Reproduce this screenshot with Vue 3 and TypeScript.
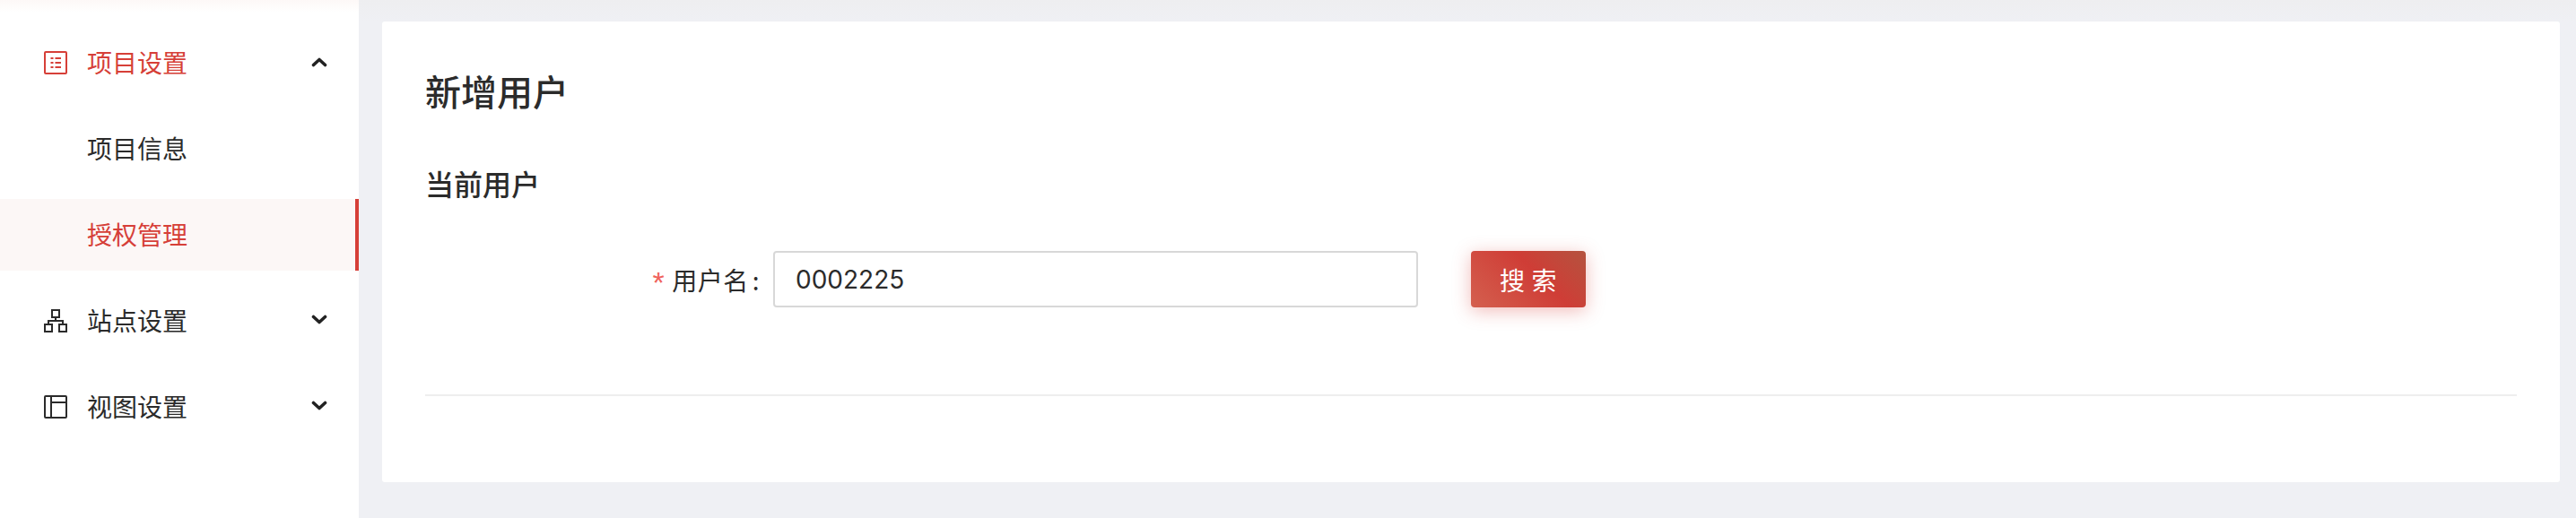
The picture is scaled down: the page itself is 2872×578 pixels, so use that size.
<script setup lang="ts">
interface Child { label: string; active?: boolean }
interface MenuItem { label: string; icon: 'list' | 'tree' | 'layout'; open?: boolean; active?: boolean; children?: Child[] }

const menu: MenuItem[] = [
  { label: '项目设置', icon: 'list', open: true, active: true, children: [
    { label: '项目信息' },
    { label: '授权管理', active: true },
  ] },
  { label: '站点设置', icon: 'tree' },
  { label: '视图设置', icon: 'layout' },
]
</script>

<template>
  <div class="page">
    <aside class="sidebar">
      <div class="fade"></div>
      <template v-for="item in menu" :key="item.label">
        <div class="row" :class="{ red: item.active }">
          <svg class="icon" viewBox="0 0 26 26" fill="none" stroke="currentColor" stroke-width="2">
            <template v-if="item.icon === 'list'">
              <rect x="1" y="1" width="24" height="24" rx="1" />
              <path d="M7.500 8h3M12.500 8h6.500M7.500 13h3M12.500 13h6.500M7.500 18h3M12.500 18h6.500" />
            </template>
            <template v-else-if="item.icon === 'tree'">
              <rect x="9" y="1" width="8" height="8" />
              <rect x="1" y="17" width="8" height="8" />
              <rect x="17" y="17" width="8" height="8" />
              <path d="M13 9v4M5 17v-4h16v4" />
            </template>
            <template v-else>
              <rect x="1" y="1" width="24" height="24" rx="1" />
              <path d="M8 1v24M8 8h17" />
            </template>
          </svg>
          <span class="label">{{ item.label }}</span>
          <svg class="chev" viewBox="0 0 18 12" fill="none" stroke="#222" stroke-width="3.600" stroke-linecap="round" stroke-linejoin="round">
            <path :d="item.open ? 'M2.500 9.500L9 3.500l6.500 6' : 'M2.500 2.500L9 8.500l6.500-6'" />
          </svg>
        </div>
        <div
          v-for="child in item.children"
          :key="child.label"
          class="row child"
          :class="{ selected: child.active }"
        >
          <span class="label">{{ child.label }}</span>
        </div>
      </template>
    </aside>

    <main class="main">
      <section class="card">
        <h1 class="title">新增用户</h1>
        <h2 class="subtitle">当前用户</h2>
        <div class="form-row">
          <label class="field-label"><span class="star">*</span>用户名<span class="colon">:</span></label>
          <input class="input" value="0002225" />
          <button class="btn">搜 索</button>
        </div>
        <div class="divider"></div>
      </section>
    </main>
  </div>
</template>

<style>
html, body { margin: 0; padding: 0; background: #eff0f4; }
</style>

<style scoped>
.page {
  display: flex;
  width: 2872px;
  height: 578px;
  overflow: hidden;
  font-family: "Noto Sans CJK SC", "Noto Sans", sans-serif;
  color: #2b2b2b;
}
.sidebar {
  width: 400px;
  flex: none;
  background: #fff;
  padding-top: 30px;
  box-sizing: border-box;
  position: relative;
  display: flex;
  flex-direction: column;
  gap: 16px;
}
.fade {
  position: absolute;
  left: 0;
  right: 0;
  top: 0;
  height: 14px;
  background: linear-gradient(#fdf8f7, #fff);
}
.row {
  height: 80px;
  display: flex;
  align-items: center;
  padding-left: 49px;
  padding-right: 35px;
  box-sizing: border-box;
  font-size: 28px;
  flex: none;
}
.row.red { color: #d63f38; }
.icon { width: 26px; height: 26px; flex: none; margin-right: 22px; }
.label { line-height: 40px; position: relative; top: -1px; }
.chev { width: 18px; height: 12px; margin-left: auto; flex: none; position: relative; top: -1px; }
.child { padding-left: 97px; }
.selected {
  background: #fcf7f6;
  color: #d63f38;
  border-right: 4px solid #d63f38;
}
.main {
  flex: 1;
  padding: 24px 18px 40px 26px;
  box-sizing: border-box;
  background: linear-gradient(#eeeef0, #eff0f4 24px);
}
.card {
  height: 514px;
  background: #fff;
  border-radius: 3px;
  padding: 0 48px;
  box-sizing: border-box;
}
.title {
  margin: 0;
  padding-top: 50px;
  font-size: 40px;
  line-height: 54px;
  font-weight: 500;
  color: #2b2b2b;
}
.subtitle {
  margin: 0;
  padding-top: 51px;
  font-size: 32px;
  line-height: 50px;
  font-weight: 500;
  color: #2b2b2b;
}
.form-row {
  display: flex;
  align-items: center;
  margin-top: 51px;
  height: 63px;
}
.field-label {
  width: 388px;
  flex: none;
  display: flex;
  justify-content: flex-end;
  align-items: center;
  font-size: 28px;
  letter-spacing: 0.5px;
  box-sizing: border-box;
  padding-right: 15px;
}
.colon { margin-left: 4px; }
.star {
  color: #f0635c;
  margin-right: 8px;
  font-family: "Liberation Sans", sans-serif;
  font-size: 34px;
  line-height: 1;
  position: relative;
  top: 3px;
}
.input {
  width: 719px;
  height: 63px;
  flex: none;
  box-sizing: border-box;
  border: 2px solid #d8d8d8;
  border-radius: 4px;
  padding: 0 23px;
  font-family: Inter, sans-serif;
  font-size: 28px;
  color: #2b2b2b;
  outline: none;
  background: #fff;
}
.btn {
  width: 128px;
  height: 63px;
  flex: none;
  margin-left: 59px;
  border: none;
  border-radius: 4px;
  color: #fff;
  font-family: inherit;
  font-size: 28px;
  letter-spacing: 0.5px;
  padding: 0;
  background: linear-gradient(45deg, #d4604f 0%, #cf3d36 58%, #b4533f 100%);
  box-shadow: 0 4px 20px rgba(214, 63, 56, 0.35);
}
.divider {
  height: 2px;
  background: #eeeeee;
  margin-top: 97px;
}
</style>
